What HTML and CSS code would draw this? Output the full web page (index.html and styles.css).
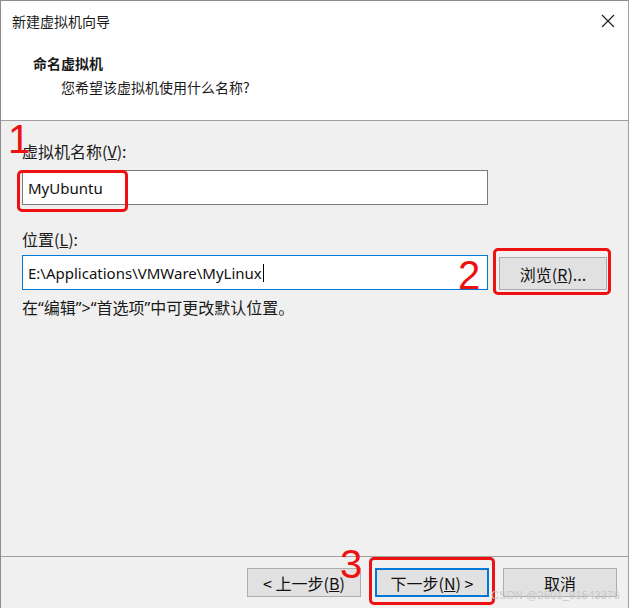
FILE: index.html
```html
<!DOCTYPE html>
<html lang="zh-CN">
<head>
<meta charset="utf-8">
<title>新建虚拟机向导</title>
<link rel="stylesheet" href="styles.css">
</head>
<body>
<div class="window">
  <div class="titlebar">
    <span class="title">新建虚拟机向导</span>
    <svg class="close" width="14" height="14" viewBox="0 0 14 14"><path d="M1 1L13 13M13 1L1 13" stroke="#222" stroke-width="1.2" fill="none"/></svg>
  </div>
  <div class="header">
    <div class="heading">命名虚拟机</div>
    <div class="subheading">您希望该虚拟机使用什么名称?</div>
  </div>
  <div class="body">
    <div class="label">虚拟机名称(<u>V</u>):</div>
    <div class="input name">MyUbuntu</div>
    <div class="label loc-label">位置(<u>L</u>):</div>
    <div class="row">
      <div class="input loc">E:\Applications\VMWare\MyLinux<span class="caret"></span></div>
      <div class="btn browse">浏览(<u>R</u>)...</div>
    </div>
    <div class="hint">在<span class="q">“</span>编辑<span class="q">”&gt;“</span>首选项<span class="q">”</span>中可更改默认位置。</div>
  </div>
  <div class="footer">
    <div class="btn">&lt; 上一步(<u>B</u>)</div>
    <div class="btn primary">下一步(<u>N</u>) &gt;</div>
    <div class="btn">取消</div>
  </div>

  <div class="mark box1"></div>
  <div class="mark box2"></div>
  <div class="mark box3"></div>
  <div class="num n1">1</div>
  <div class="num n2">2</div>
  <div class="num n3">3</div>
  <div class="watermark">CSDN @2501_91543376</div>
</div>
</body>
</html>
```
FILE: styles.css
```css
html, body {
  margin: 0;
  padding: 0;
  background: #ffffff;
}
body {
  font-family: "Noto Sans CJK SC", "Noto Sans", sans-serif;
  font-size: 14px;
  color: #1a1a1a;
}
.window {
  position: relative;
  width: 627px;
  height: 607px;
  border: 1px solid #8c8c8c;
  border-right-color: #a0a0a0;
  display: flex;
  flex-direction: column;
  background: #f0f0f0;
  overflow: hidden;
}
.titlebar {
  height: 41px;
  background: #fff;
  display: flex;
  align-items: center;
  justify-content: space-between;
  padding: 0 13px 0 11px;
}
.title {
  font-size: 14px;
  line-height: 20px;
  margin-top: -2px;
}
.close {
  display: block;
  margin-top: -1px;
}
.header {
  background: #fff;
  height: 79px;
  border-bottom: 1px solid #a0a0a0;
  padding-left: 32px;
  box-sizing: border-box;
  padding-top: 10px;
}
.heading {
  font-weight: bold;
  font-size: 14px;
  line-height: 22px;
}
.subheading {
  font-size: 14px;
  line-height: 20px;
  padding-left: 28px;
  margin-top: 3px;
}
.body {
  flex: 1;
  padding: 19px 0 0 21px;
  box-sizing: border-box;
}
.label {
  font-size: 16px;
  line-height: 22px;
}
.loc-label {
  margin-top: 23px;
}
.input {
  box-sizing: border-box;
  background: #fff;
  border: 1px solid #7a7a7a;
  height: 35px;
  width: 466px;
  font-family: "Noto Sans", "Noto Sans CJK SC", sans-serif;
  font-size: 15px;
  display: flex;
  align-items: center;
  padding-left: 5px;
  color: #111;
}
.name {
  margin-top: 8px;
}
.row {
  display: flex;
  align-items: center;
  margin-top: 5px;
  gap: 11px;
}
.loc {
  border: 1px solid #0078d7;
}
.caret {
  display: inline-block;
  width: 1px;
  height: 18px;
  background: #000;
  margin-left: 1px;
}
.btn {
  box-sizing: border-box;
  height: 29px;
  width: 114px;
  background: #e1e1e1;
  border: 1px solid #adadad;
  display: flex;
  align-items: center;
  justify-content: center;
  font-size: 16px;
  color: #111;
}
.browse {
  width: 108px;
  height: 33px;
  margin-top: 2px;
}
.hint {
  margin-top: 6px;
  font-size: 16px;
  line-height: 22px;
}
.q {
  font-family: "Noto Sans", sans-serif;
}
.footer {
  height: 52px;
  border-top: 1px solid #a0a0a0;
  display: flex;
  justify-content: flex-end;
  align-items: flex-start;
  padding: 11px 11px 0 0;
  box-sizing: border-box;
  gap: 14px;
}
.primary {
  border: 2px solid #0078d7;
}
.mark {
  position: absolute;
  border: 3px solid #ee1111;
  border-radius: 5px;
  box-sizing: border-box;
}
.box1 { left: 16px; top: 169px; width: 111px; height: 42px; }
.box2 { left: 492px; top: 247px; width: 118px; height: 47px; }
.box3 { left: 368px; top: 556px; width: 126px; height: 48px; }
.num {
  position: absolute;
  color: #ee1111;
  font-family: "Liberation Sans", sans-serif;
  font-size: 40px;
  line-height: 40px;
}
.n1 { left: 7px; top: 118px; }
.n2 { left: 457px; top: 254px; }
.n3 { left: 339px; top: 543px; }
.watermark {
  position: absolute;
  left: 490px;
  top: 588px;
  font-family: "Liberation Sans", sans-serif;
  font-size: 11px;
  color: #c8c8c8;
  letter-spacing: 0.2px;
}
```
